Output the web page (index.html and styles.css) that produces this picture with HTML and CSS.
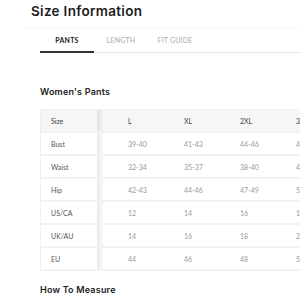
FILE: index.html
```html
<!DOCTYPE html>
<html lang="en">
<head>
    <meta charset="UTF-8">
    <title>Size Information</title>
    <link rel="stylesheet" href="styles.css">
</head>
<body>

    <!-- Page heading -->
    <div class="header">
        <h1>Size Information</h1>
    </div>

    <!-- Tabs -->
    <div class="tabs-wrap">
        <div class="tabs">
            <div class="tab active">PANTS</div>
            <div class="tab">LENGTH</div>
            <div class="tab">FIT GUIDE</div>
        </div>
    </div>

    <div class="content">
        <h2>Women's Pants</h2>

        <table class="size-table">
            <tr class="head">
                <td class="label">Size</td>
                <td class="first">L</td>
                <td>XL</td>
                <td>2XL</td>
                <td>3XL</td>
            </tr>
            <tr>
                <td class="label">Bust</td>
                <td class="first">39-40</td>
                <td>41-43</td>
                <td>44-46</td>
                <td>47-49</td>
            </tr>
            <tr>
                <td class="label">Waist</td>
                <td class="first">32-34</td>
                <td>35-37</td>
                <td>38-40</td>
                <td>41-43</td>
            </tr>
            <tr>
                <td class="label">Hip</td>
                <td class="first">42-43</td>
                <td>44-46</td>
                <td>47-49</td>
                <td>50-52</td>
            </tr>
            <tr>
                <td class="label">US/CA</td>
                <td class="first">12</td>
                <td>14</td>
                <td>16</td>
                <td>18</td>
            </tr>
            <tr>
                <td class="label">UK/AU</td>
                <td class="first">14</td>
                <td>16</td>
                <td>18</td>
                <td>20</td>
            </tr>
            <tr>
                <td class="label">EU</td>
                <td class="first">44</td>
                <td>46</td>
                <td>48</td>
                <td>50</td>
            </tr>
        </table>

        <h2 class="measure">How To Measure</h2>
    </div>

</body>
</html>
```

FILE: styles.css
```css
body {
    margin: 0;
    font-family: 'Lato', sans-serif;
    background-color: #fff;
    overflow: hidden;
    color: #222;
}

.header {
    padding: 1px 0 0 31px;
}

h1 {
    margin: 0;
    font-family: 'Inter', sans-serif;
    font-size: 13.5px;
    font-weight: 600;
    line-height: 20px;
    letter-spacing: 0.3px;
    color: #1c1c1c;
}

.tabs-wrap {
    margin: 7px 0 0 24px;
    padding-left: 16px;
    border-top: 1px solid #f5f5f5;
}

.tabs {
    display: flex;
    border-bottom: 1px solid #e4e4e4;
}

.tab {
    width: 54px;
    height: 22px;
    line-height: 22px;
    text-align: center;
    font-size: 7px;
    color: #aaa;
    letter-spacing: 0.2px;
    border-bottom: 2px solid transparent;
    margin-bottom: -1px;
}

.tab.active {
    color: #222;
    font-weight: 700;
    border-bottom-color: #333;
}

.content {
    padding-left: 40px;
}

h2 {
    margin: 0;
    padding-top: 32px;
    font-family: 'Inter', sans-serif;
    font-size: 9px;
    font-weight: 600;
    line-height: 14px;
    letter-spacing: 0.2px;
    color: #222;
}

.size-table {
    width: 281px;
    table-layout: fixed;
    margin-top: 10px;
    border-collapse: separate;
    border-spacing: 0;
    border-left: 1px solid #f0f0f0;
    border-top: 1px solid #f0f0f0;
    font-size: 7px;
}

.size-table td {
    height: 21px;
    padding: 0 0 0 31px;
    width: 25px;
    white-space: nowrap;
    color: #9a9a9a;
    border-bottom: 2px solid #f2f2f2;
}

.size-table td.label {
    width: 46px;
    padding-left: 10px;
    color: #555;
}

.size-table td.first {
    background-image: linear-gradient(to right, rgba(0, 0, 0, 0.09), rgba(0, 0, 0, 0) 7px);
}

.size-table .head td {
    background-color: #f6f6f6;
    color: #444;
}

.measure {
    padding-top: 12px;
}
```
